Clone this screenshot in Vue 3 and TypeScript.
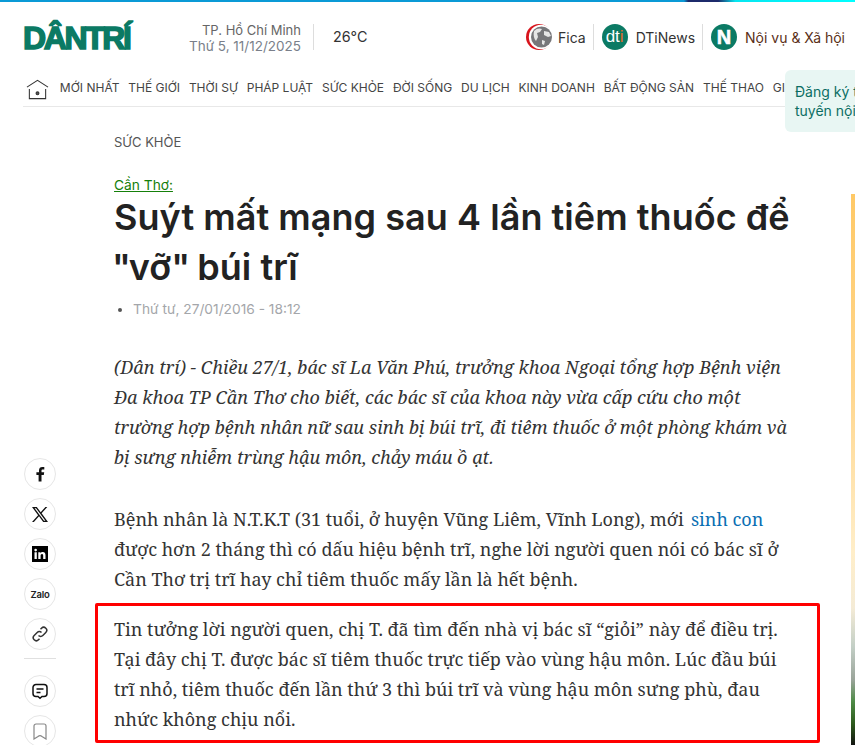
<script setup lang="ts">
const nav: string[] = ['MỚI NHẤT','THẾ GIỚI','THỜI SỰ','PHÁP LUẬT','SỨC KHỎE','ĐỜI SỐNG','DU LỊCH','KINH DOANH','BẤT ĐỘNG SẢN','THẾ THAO','GIẢI TRÍ'];
</script>

<template>
  <div class="page">
    <div class="topbar"></div>
    <header class="head">
      <div class="logo">DÂNTRÍ</div>
      <div class="place"><span>TP. Hồ Chí Minh</span><span class="date">Thứ 5, 11/12/2025</span></div>
      <div class="temp">26°C</div>
      <div class="brands">
        <div class="brand fica-brand">
          <svg width="26" height="26" viewBox="0 0 26 26"><circle cx="13" cy="13" r="13" fill="#d8141c"/><circle cx="15" cy="13" r="12.200" fill="#fff"/><circle cx="15.500" cy="13" r="10.500" fill="#77777a"/><path d="M8 7c3-3 6-3 8-2l-2 3-3 1 1 4-2 4c-2-2-3-6-2-10zM18 7l5 1 2 4-3 1-4-2zM16 16l3 1-1 4-2-1z" fill="#e6e6e6"/></svg>
          <span class="fica">Fica</span>
        </div>
        <div class="brand bordered">
          <div class="disc"><b>dt</b><b class="orange">i</b></div>
          <span class="dti">DTiNews</span>
        </div>
        <div class="brand bordered last">
          <div class="disc n"><b>N</b></div>
          <span class="noivu">Nội vụ &amp; Xã hội</span>
        </div>
      </div>
    </header>
    <nav class="nav">
      <svg class="home" width="23" height="21" viewBox="0 0 24 21" fill="none" stroke="#333" stroke-width="1.100"><path d="M1 8 12 1l11 7"/><path d="M3.500 10v10h17V10"/><circle cx="12" cy="14.500" r="1.500" fill="#555"/></svg>
      <a v-for="item in nav" :key="item">{{ item }}</a>
    </nav>
    <div class="signup">Đăng ký tham gia<br>tuyến nội dung</div>
    <main class="main">
      <aside class="share">
        <div class="btn"><svg width="16" height="16" viewBox="0 0 16 16"><path d="M9.500 15.500V9h2.300l.4-2.700H9.500V4.700c0-.8.300-1.300 1.400-1.300h1.400V1c-.4 0-1.100-.1-2-.1-2 0-3.300 1.200-3.300 3.400v2H4.400V9h2.200v6.500z" fill="#111"/></svg></div>
        <div class="btn"><svg width="18" height="17" viewBox="0 0 18 17"><path d="M1 1h4.800l3.900 5.300L14.400 1h1.900l-5.700 6.300L17 16h-4.800l-4.200-5.700L2.900 16H1l6.100-6.700zM3.600 2.300 13 14.700h1.400L5 2.300z" fill="#111" fill-rule="evenodd"/></svg></div>
        <div class="btn"><svg width="16" height="16" viewBox="0 0 16 16"><rect width="16" height="16" fill="#000"/><path d="M2.500 6.200h2.300V13H2.500zM3.650 2.800a1.300 1.300 0 1 1 0 2.600 1.300 1.300 0 0 1 0-2.600zM6.300 6.200h2.200v1c.4-.7 1.200-1.200 2.300-1.200 2.100 0 2.700 1.300 2.700 3.300V13h-2.300V9.700c0-.9-.2-1.700-1.200-1.700s-1.400.8-1.400 1.700V13H6.300z" fill="#fff"/></svg></div>
        <div class="btn zalo">Zalo</div>
        <div class="btn"><svg width="18" height="18" viewBox="0 0 18 18" fill="none" stroke="#333" stroke-width="1.500"><path d="M7.500 10.500a3 3 0 0 0 4.300 0l3-3a3 3 0 0 0-4.300-4.300l-1 1"/><path d="M10.500 7.500a3 3 0 0 0-4.300 0l-3 3a3 3 0 0 0 4.300 4.300l1-1"/></svg></div>
        <div class="sep"></div>
        <div class="btn"><svg width="16" height="17" viewBox="0 0 16 17" fill="none" stroke="#111" stroke-width="1.500"><path d="M4 1.500h8A3 3 0 0 1 15 4.500v6a3 3 0 0 1-3 3h-2L8 15.300 6 13.500H4a3 3 0 0 1-3-3v-6a3 3 0 0 1 3-3z"/><path d="M4.500 6h7M4.500 9.500h4"/></svg></div>
        <div class="btn"><svg width="14" height="17" viewBox="0 0 14 17" fill="none" stroke="#888" stroke-width="1.200"><path d="M3 1h8a2 2 0 0 1 2 2v13l-4-2.500a3 3 0 0 0-4 0L1 16V3a2 2 0 0 1 2-2z"/></svg></div>
      </aside>
      <article class="article">
        <div class="cat">SỨC KHỎE</div>
        <a class="tag">Cần Thơ:</a>
        <h1>Suýt mất mạng sau 4 lần tiêm thuốc để <span class="q first">"</span>vỡ<span class="q">"</span> búi trĩ</h1>
        <ul class="meta"><li>Thứ tư, 27/01/2016 - 18:12</li></ul>
        <p class="lead">(Dân trí) - Chiều 27/1, bác sĩ La Văn Phú, trưởng khoa Ngoại tổng hợp Bệnh viện Đa khoa TP Cần Thơ cho biết, các bác sĩ của khoa này vừa cấp cứu cho một trường hợp bệnh nhân nữ sau sinh bị búi trĩ, đi tiêm thuốc ở một phòng khám và bị sưng nhiễm trùng hậu môn, chảy máu ồ ạt.</p>
        <p class="para">Bệnh nhân là N.T.K.T (31 tuổi, ở huyện Vũng Liêm, Vĩnh Long), mới <a class="link">sinh con</a> được hơn 2 tháng thì có dấu hiệu bệnh trĩ, nghe lời người quen nói có bác sĩ ở Cần Thơ trị trĩ hay chỉ tiêm thuốc mấy lần là hết bệnh.</p>
        <div class="marked">
          <p class="para">Tin tưởng lời người quen, chị T. đã tìm đến nhà vị bác sĩ “giỏi” này để điều trị. Tại đây chị T. được bác sĩ tiêm thuốc trực tiếp vào vùng hậu môn. Lúc đầu búi trĩ nhỏ, tiêm thuốc đến lần thứ 3 thì búi trĩ và vùng hậu môn sưng phù, đau nhức không chịu nổi.</p>
        </div>
      </article>
      <div class="ad"></div>
    </main>
  </div>
</template>

<style>
html, body { margin: 0; height: 745px; overflow: hidden; background: #fff; }
</style>

<style scoped>
.page { position: relative; width: 855px; height: 745px; overflow: hidden; font-family: Inter, "Noto Sans", sans-serif; color: #333; }
.topbar { height: 2px; background: linear-gradient(90deg, #0a9ad6 0 80%, #1c2a6b 80.5%, #1c2a6b 84%, #06e6f0 86%, #0ff 100%); }
.head { display: flex; align-items: center; height: 70px; padding-left: 23px; box-sizing: border-box; }
.logo { width: 108px; flex: none; margin-top: 1px; font-family: "Liberation Sans", sans-serif; font-weight: 700; font-size: 32px; letter-spacing: -2.400px; color: #0b7a64; -webkit-text-stroke: 1.500px #0b7a64; white-space: nowrap; line-height: 28px; }
.place { width: 170px; display: flex; flex-direction: column; align-items: flex-end; font-size: 13px; line-height: 16px; color: #666; margin-top: 2px; }
.date { color: #7a7f8a; font-size: 13.500px; }
.temp { margin-left: 12px; padding-left: 19px; border-left: 1px solid #ddd; height: 26px; line-height: 26px; font-size: 14.300px; color: #333; }
.brands { margin-left: auto; display: flex; align-items: center; padding-right: 10px; }
.brand { display: flex; align-items: center; gap: 8px; font-size: 14px; }
.fica-brand { gap: 6px; }
.fica { color: #333; }
.bordered { border-left: 1px solid #ddd; margin-left: 7px; padding-left: 8px; height: 26px; }
.noivu { color: #5a3018; }
.dti { color: #333; }
.disc { width: 26px; height: 26px; border-radius: 50%; background: #0b7a64; display: flex; align-items: center; justify-content: center; color: #fff; font-size: 17px; font-family: "Liberation Sans", sans-serif; }
.disc b { font-weight: 400; }
.disc .orange { color: #e0692a; }
.disc.n b { font-weight: 700; font-size: 20px; -webkit-text-stroke: 0.600px #fff; }
.nav { display: flex; align-items: center; gap: 8.850px; height: 34px; margin-left: 23px; border-bottom: 1px solid #e8e8e8; font-size: 12px; color: #444; white-space: nowrap; overflow: hidden; }
.nav a { position: relative; top: -2px; }
.home { flex: none; margin: 0 2px 0 3px; }
.signup { position: absolute; top: 70px; left: 785px; width: 170px; height: 62px; padding: 12px 10px 0; box-sizing: border-box; background: #e8f6f3; border-radius: 6px; font-size: 14px; line-height: 19px; color: #0b6e63; white-space: nowrap; }
.main { display: flex; }
.share { width: 114px; flex: none; box-sizing: border-box; padding: 351px 0 0 24px; display: flex; flex-direction: column; gap: 8px; }
.btn { width: 30px; height: 30px; border: 1px solid #e6e6e6; border-radius: 50%; display: flex; align-items: center; justify-content: center; flex: none; }
.zalo { font-size: 9.500px; font-weight: 600; color: #222; letter-spacing: -0.200px; }
.sep { width: 32px; height: 1px; background: #e0e0e0; margin: 0 0 8px; }
.article { width: 678px; flex: none; }
.cat { margin-top: 27px; font-size: 13px; line-height: 16px; color: #555; }
.tag { display: block; margin-top: 29px; font-size: 13.750px; line-height: 13px; color: #15800a; text-decoration: underline; width: fit-content; }
h1 { margin: 0; font-size: 36px; line-height: 50px; font-weight: 600; letter-spacing: 0.050px; color: #222; }
.q { letter-spacing: -2px; }
.q.first { margin-left: -2px; }
.meta { margin: 6px 0 0; padding: 0 0 0 19px; font-size: 13.750px; line-height: 22px; color: #a4a6aa; }
.meta li::marker { color: #555; }
.lead, .para { margin: 0; width: 676px; font-family: "Noto Serif", "Liberation Serif", serif; font-size: 18px; line-height: 30px; color: #333; }
.lead { margin-top: 32px; font-style: italic; }
.para { margin-top: 32px; }
.link { color: #0a6fb3; margin-left: 2.500px; }
.marked { margin: 9px 0 0 -19px; width: 725px; height: 140px; box-sizing: border-box; border: 3px solid #f00; border-radius: 2px; padding: 8px 16px; }
.marked .para { margin: 0; }
.ad { width: 4px; height: 552px; margin: 87px 0 0 59px; flex: none; background: linear-gradient(180deg, #ffc966 0%, #ffd68d 35%, #ffeec9 65%, #f4ebd6 75%, #c3cfc6 82%, #9aa49a 88%, #4d8a45 92%, #2d5a1c 96%, #111 100%); }
</style>
